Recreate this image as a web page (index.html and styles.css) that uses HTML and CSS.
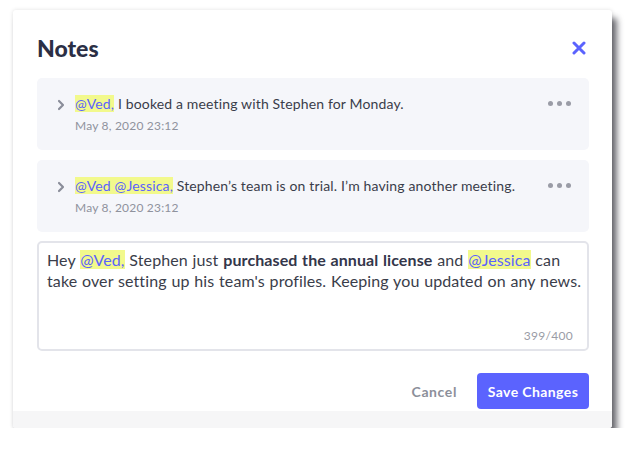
FILE: index.html
```html
<!DOCTYPE html>
<html lang="en">
<head>
  <meta charset="UTF-8">
  <title>Notes</title>
  <link rel="stylesheet" href="styles.css">
</head>
<body>

<div class="modal">
  <div class="modal-head">
    <h2>Notes</h2>
    <button class="close-btn" aria-label="Close">
      <svg width="14" height="14" viewBox="0 0 14 14"><path d="M2 2L12 12M12 2L2 12" stroke="#5b63fe" stroke-width="3" stroke-linecap="round"/></svg>
    </button>
  </div>

  <div class="note">
    <svg class="chev" width="8" height="12" viewBox="0 0 8 12"><path d="M2 2L6 6L2 10" fill="none" stroke="#8a8d99" stroke-width="2.2" stroke-linecap="round" stroke-linejoin="round"/></svg>
    <div class="note-body">
      <p><span class="mention">@Ved,</span> I booked a meeting with Stephen for Monday.</p>
      <span class="date">May 8, 2020 23:12</span>
    </div>
    <span class="more"><i></i><i></i><i></i></span>
  </div>

  <div class="note">
    <svg class="chev" width="8" height="12" viewBox="0 0 8 12"><path d="M2 2L6 6L2 10" fill="none" stroke="#8a8d99" stroke-width="2.2" stroke-linecap="round" stroke-linejoin="round"/></svg>
    <div class="note-body">
      <p><span class="mention">@Ved @Jessica,</span> Stephen’s team is on trial. I’m having another meeting.</p>
      <span class="date">May 8, 2020 23:12</span>
    </div>
    <span class="more"><i></i><i></i><i></i></span>
  </div>

  <div class="editor">
    <p>Hey <span class="mention">@Ved,</span> Stephen just <strong>purchased the annual license</strong> and <span class="mention">@Jessica</span> can take over setting up his team's profiles. Keeping you updated on any news.</p>
    <span class="count">399/400</span>
  </div>

  <div class="actions">
    <button class="cancel">Cancel</button>
    <button class="save">Save Changes</button>
  </div>
  <div class="modal-foot"></div>
</div>

</body>
</html>
```

FILE: styles.css
```css
body {
  margin: 0;
  background: #fff;
  font-family: Lato, "Open Sans", sans-serif;
  color: #3a3d4a;
}
.modal {
  width: 599px;
  margin: 10px 0 0 13px;
  background: #fff;
  border-radius: 3px;
  box-shadow: 0 0 4px rgba(0,0,0,0.12), 5px 8px 6px rgba(30,30,40,0.65);
  overflow: hidden;
}
.modal-head {
  display: flex;
  align-items: center;
  justify-content: space-between;
  padding: 24px 24px 16px 24px;
}
h2 {
  margin: 0;
  font-size: 23px;
  font-weight: 900;
  color: #2b2f45;
}
.close-btn {
  background: none;
  border: none;
  padding: 0;
  margin-right: 2px;
  cursor: pointer;
  display: flex;
}
.note {
  display: flex;
  align-items: flex-start;
  margin: 0 23px 10px 24px;
  background: #f5f6fa;
  border-radius: 5px;
  padding: 17px 18px 17px 20px;
  height: 38px;
}
.note + .note + .editor { margin-top: -1px; }
.chev { margin-top: 4px; flex: none; }
.note-body { flex: 1; margin-left: 10px; }
.note-body p {
  margin: 0;
  font-size: 14px;
  line-height: 18px;
  letter-spacing: 0.15px;
  color: #3a3d4a;
}
.mention {
  background: #f2f98c;
  color: #5b63fe;
}
.date {
  display: block;
  margin-top: 5px;
  font-size: 12px;
  letter-spacing: 0.2px;
  color: #8f929d;
}
.more {
  display: flex;
  gap: 4px;
  margin-top: 6px;
}
.more i {
  width: 5px;
  height: 5px;
  border-radius: 50%;
  background: #9a9ca6;
}
.editor {
  margin: 0 23px 0 24px;
  border: 2px solid #e3e4ea;
  border-radius: 5px;
  height: 100px;
  padding: 6px 2px 0 8px;
  display: flex;
  flex-direction: column;
}
.editor p {
  margin: 0;
  font-size: 16px;
  line-height: 21px;
  letter-spacing: 0.1px;
  word-spacing: 0.6px;
  color: #3a3d4a;
  flex: 1;
}
.editor strong { font-weight: 700; color: #33364a; }
.count {
  align-self: flex-end;
  font-size: 12px;
  letter-spacing: 0.3px;
  color: #9a9ca6;
  margin: 0 12px 6px 0;
}
.actions {
  display: flex;
  justify-content: flex-end;
  align-items: center;
  gap: 20px;
  padding: 22px 23px 0 24px;
}
.actions button {
  font-family: Lato, "Open Sans", sans-serif;
  font-size: 14px;
  font-weight: 700;
  border: none;
  cursor: pointer;
}
.cancel {
  background: none;
  color: #8c8f9a;
  padding: 0;
  letter-spacing: 0.6px;
}
.save {
  background: #5b63fe;
  color: #fff;
  border-radius: 4px;
  height: 36px;
  padding: 0;
  width: 112px;
  letter-spacing: 0.4px;
}
.modal-foot {
  height: 17px;
  background: #f6f6f7;
  margin-top: 2px;
}
```
